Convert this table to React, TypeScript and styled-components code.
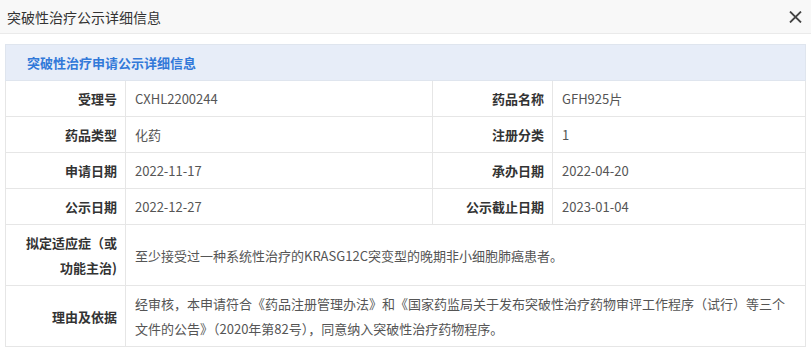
import React from "react"
import styled, { createGlobalStyle } from "styled-components"

const GlobalStyle = createGlobalStyle`
  html, body {
    margin: 0;
    padding: 0;
    background: #fff;
    font-family: "Microsoft YaHei", "Noto Sans CJK SC", "Liberation Sans", sans-serif;
  }
`

const Dialog = styled.div`
  width: 811px;
  height: 352px;
  background: #fff;
  overflow: hidden;
`

const Header = styled.div`
  height: 34px;
  box-sizing: border-box;
  display: flex;
  align-items: center;
  justify-content: space-between;
  padding: 0 9px 0 7px;
  background: #f8f8f8;
  border-bottom: 1px solid #eaeaea;
`

const Title = styled.span`
  font-size: 14px;
  color: #333;
`

const CloseButton = styled.button`
  width: 14px;
  height: 14px;
  padding: 0;
  border: 0;
  background: none;
  display: flex;
  align-items: center;
  justify-content: center;
  cursor: pointer;
`

const Body = styled.div`
  padding: 10px 6px 0 5px;
`

const Table = styled.table`
  width: 800px;
  border-collapse: collapse;
  table-layout: fixed;
  font-size: 13px;
`

const Caption = styled.th`
  height: 35px;
  padding: 0 0 0 21px;
  text-align: left;
  font-weight: bold;
  color: #3279d9;
  background: #e7edf8;
  border: 1px solid #dfe5ee;
`

const Label = styled.th`
  padding: 5px 8px 5px 6px;
  line-height: 25px;
  text-align: right;
  font-weight: bold;
  color: #333;
  border: 1px solid #e6e6e6;
  vertical-align: middle;
`

const Value = styled.td<{ $tall?: boolean }>`
  padding: 5px 10px 5px 9px;
  line-height: 25px;
  color: #555;
  border: 1px solid #e6e6e6;
  vertical-align: middle;
  height: ${(p) => (p.$tall ? "50px" : "25px")};
`

const pairs: [string, string, string, string][] = [
  ["受理号", "CXHL2200244", "药品名称", "GFH925片"],
  ["药品类型", "化药", "注册分类", "1"],
  ["申请日期", "2022-11-17", "承办日期", "2022-04-20"],
  ["公示日期", "2022-12-27", "公示截止日期", "2023-01-04"],
]

const CloseIcon = () => (
  <svg width="13" height="12" viewBox="0 0 13 12">
    <path d="M1 0.5 L12 11.5 M12 0.5 L1 11.5" stroke="#444" strokeWidth="1.8" fill="none" />
  </svg>
)

export default function App() {
  return (
    <>
      <GlobalStyle />
      <Dialog>
        <Header>
          <Title>突破性治疗公示详细信息</Title>
          <CloseButton aria-label="关闭">
            <CloseIcon />
          </CloseButton>
        </Header>
        <Body>
          <Table>
            <colgroup>
              <col style={{ width: 120 }} />
              <col style={{ width: 307 }} />
              <col style={{ width: 120 }} />
              <col style={{ width: 253 }} />
            </colgroup>
            <thead>
              <tr>
                <Caption colSpan={4}>突破性治疗申请公示详细信息</Caption>
              </tr>
            </thead>
            <tbody>
              {pairs.map(([l1, v1, l2, v2]) => (
                <tr key={l1}>
                  <Label>{l1}</Label>
                  <Value>{v1}</Value>
                  <Label>{l2}</Label>
                  <Value>{v2}</Value>
                </tr>
              ))}
              <tr>
                <Label>
                  拟定适应症（或
                  <br />
                  功能主治)
                </Label>
                <Value colSpan={3} $tall>
                  至少接受过一种系统性治疗的KRASG12C突变型的晚期非小细胞肺癌患者。
                </Value>
              </tr>
              <tr>
                <Label>理由及依据</Label>
                <Value colSpan={3} $tall>
                  经审核，本申请符合《药品注册管理办法》和《国家药监局关于发布突破性治疗药物审评工作程序（试行）等三个文件的公告》（2020年第82号），同意纳入突破性治疗药物程序。
                </Value>
              </tr>
            </tbody>
          </Table>
        </Body>
      </Dialog>
    </>
  )
}
